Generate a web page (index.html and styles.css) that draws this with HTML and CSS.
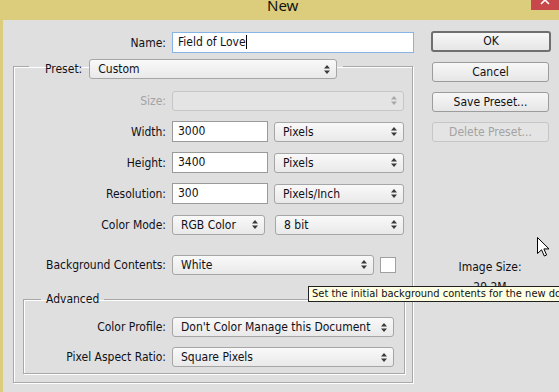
FILE: index.html
```html
<!DOCTYPE html>
<html lang="en">
<head>
  <meta charset="UTF-8">
  <title>New</title>
  <link rel="stylesheet" href="styles.css">
</head>
<body>

  <div class="titlebar">
    <span class="title">New</span>
    <span class="close">
      <svg width="28" height="10" viewBox="0 0 28 10"><path d="M10 -4L18 4M18 -4L10 4" stroke="#fff" stroke-width="1.6"/></svg>
    </span>
  </div>

  <div class="frame">
    <div class="main">
      <div class="row name-row">
        <span class="lbl">Name:</span>
        <div class="field name-field">Field of Love<span class="caret"></span></div>
      </div>

      <fieldset class="group preset">
        <legend>
          <span class="legend-lbl">Preset:</span>
          <div class="select w-preset"><span>Custom</span><svg class="arrows" width="6" height="9" viewBox="0 0 6 9"><path d="M3 0L6 3.5H0ZM0 5.5H6L3 9Z"/></svg></div>
        </legend>

        <div class="row disabled">
          <span class="lbl">Size:</span>
          <div class="select w-full"><span></span><svg class="arrows" width="6" height="9" viewBox="0 0 6 9"><path d="M3 0L6 3.5H0ZM0 5.5H6L3 9Z"/></svg></div>
        </div>
        <div class="row">
          <span class="lbl">Width:</span>
          <div class="field w-num">3000</div>
          <div class="select w-unit"><span>Pixels</span><svg class="arrows" width="6" height="9" viewBox="0 0 6 9"><path d="M3 0L6 3.5H0ZM0 5.5H6L3 9Z"/></svg></div>
        </div>
        <div class="row">
          <span class="lbl">Height:</span>
          <div class="field w-num">3400</div>
          <div class="select w-unit"><span>Pixels</span><svg class="arrows" width="6" height="9" viewBox="0 0 6 9"><path d="M3 0L6 3.5H0ZM0 5.5H6L3 9Z"/></svg></div>
        </div>
        <div class="row">
          <span class="lbl">Resolution:</span>
          <div class="field w-num">300</div>
          <div class="select w-unit"><span>Pixels/Inch</span><svg class="arrows" width="6" height="9" viewBox="0 0 6 9"><path d="M3 0L6 3.5H0ZM0 5.5H6L3 9Z"/></svg></div>
        </div>
        <div class="row">
          <span class="lbl">Color Mode:</span>
          <div class="select w-mode"><span>RGB Color</span><svg class="arrows" width="6" height="9" viewBox="0 0 6 9"><path d="M3 0L6 3.5H0ZM0 5.5H6L3 9Z"/></svg></div>
          <div class="select w-bits"><span>8 bit</span><svg class="arrows" width="6" height="9" viewBox="0 0 6 9"><path d="M3 0L6 3.5H0ZM0 5.5H6L3 9Z"/></svg></div>
        </div>
        <div class="row row-bg">
          <span class="lbl">Background Contents:</span>
          <div class="select w-bg"><span>White</span><svg class="arrows" width="6" height="9" viewBox="0 0 6 9"><path d="M3 0L6 3.5H0ZM0 5.5H6L3 9Z"/></svg></div>
          <div class="swatch"></div>
        </div>

        <fieldset class="group advanced">
          <legend>Advanced</legend>
          <div class="row">
            <span class="lbl">Color Profile:</span>
            <div class="select w-adv"><span>Don't Color Manage this Document</span><svg class="arrows" width="6" height="9" viewBox="0 0 6 9"><path d="M3 0L6 3.5H0ZM0 5.5H6L3 9Z"/></svg></div>
          </div>
          <div class="row">
            <span class="lbl">Pixel Aspect Ratio:</span>
            <div class="select w-adv"><span>Square Pixels</span><svg class="arrows" width="6" height="9" viewBox="0 0 6 9"><path d="M3 0L6 3.5H0ZM0 5.5H6L3 9Z"/></svg></div>
          </div>
        </fieldset>
      </fieldset>
    </div>

    <div class="side">
      <div class="btn btn-default">OK</div>
      <div class="btn">Cancel</div>
      <div class="btn">Save Preset...</div>
      <div class="btn btn-disabled">Delete Preset...</div>
      <div class="image-size">Image Size:</div>
      <div class="image-size-value">29.2M</div>
    </div>
  </div>

  <div class="tooltip">Set the initial background contents for the new document.</div>

  <svg class="cursor" width="13" height="20" viewBox="0 0 13 20">
    <path d="M0.5 0.5V16.5L4.5 12.8L7.3 19L9.6 18L6.9 11.9H12Z" fill="#fff" stroke="#000" stroke-width="1" stroke-linejoin="miter"/>
  </svg>

</body>
</html>
```

FILE: styles.css
```css
html, body {
  margin: 0;
  height: 100%;
}
body {
  position: relative;
  overflow: hidden;
  background: #dfdfdf;
  font-family: "DejaVu Sans Condensed", "DejaVu Sans", sans-serif;
  font-stretch: condensed;
  font-size: 12px;
  color: #101018;
}
.titlebar {
  display: flex;
  height: 20px;
  background: #dccd7c;
}
.title {
  margin-left: 267px;
  font-family: "Noto Sans", sans-serif;
  font-stretch: normal;
  font-size: 15px;
  line-height: 11px;
  color: #111;
}
.close {
  margin-left: auto;
  width: 28px;
  height: 10px;
  background: #c7474b;
}
.close svg {
  display: block;
}
.frame {
  display: flex;
  height: 372px;
  border-left: 3px solid #dccd7c;
}
.main {
  width: 412px;
  padding: 12px 0 0 10px;
  box-sizing: border-box;
}
.side {
  display: flex;
  flex-direction: column;
  align-items: flex-start;
  padding: 11px 0 0 16px;
}

/* rows */
.row {
  display: flex;
  align-items: center;
  gap: 6px;
  height: 21px;
  margin-top: 10px;
}
.lbl {
  width: 152px;
  flex: none;
  text-align: right;
}
.name-row {
  margin-top: 0;
}
.name-row .lbl {
  width: 153px;
}
.disabled .lbl {
  color: #a3a3a3;
}
.row-bg {
  margin-top: 19px;
}

/* group boxes */
.group {
  margin: 0;
  border: 1px solid #a8a8a8;
  box-shadow: 1px 1px 0 #fff, inset 1px 1px 0 #fff;
  box-sizing: border-box;
}
.preset {
  width: 400px;
  padding: 1px 0 8px 0;
}
.preset > legend {
  display: flex;
  align-items: center;
  padding: 6px 6px 0 16px;
  margin-left: 15px;
}
.legend-lbl {
  margin-right: 7px;
}
.advanced {
  width: 382px;
  margin: 17px 0 0 9px;
  padding: 0 0 6px 0;
}
.advanced > legend {
  padding: 0 5px;
  margin-left: 17px;
  line-height: 15px;
}
.advanced .lbl {
  width: 142px;
}
.advanced .row {
  height: 20px;
}

/* controls */
.field {
  height: 21px;
  box-sizing: border-box;
  border: 1px solid #9a9a9a;
  background: #fff;
  padding-left: 5px;
  line-height: 19px;
  white-space: nowrap;
}
.name-field {
  width: 242px;
  border-color: #86b4e4;
}
.caret {
  display: inline-block;
  width: 1px;
  height: 14px;
  background: #000;
  vertical-align: -3px;
}
.select {
  display: flex;
  align-items: center;
  justify-content: space-between;
  height: 20px;
  box-sizing: border-box;
  border: 1px solid #a6a6a6;
  border-radius: 3px;
  background: linear-gradient(#f9f9f9, #e9e9e9);
  padding: 0 6px 0 8px;
  white-space: nowrap;
}
.arrows {
  flex: none;
  fill: #3a3a3a;
}
.disabled .select {
  border-color: #c6c6c6;
  background: #e4e4e4;
}
.disabled .arrows {
  fill: #a8a8a8;
}
.w-preset { width: 248px; }
.w-full { width: 232px; }
.w-num { width: 96px; }
.w-unit { width: 130px; }
.w-mode { width: 93px; }
.w-bits { width: 129px; margin-left: 4px; }
.w-bg { width: 202px; }
.w-adv { width: 222px; }
.swatch {
  width: 16px;
  height: 16px;
  box-sizing: border-box;
  border: 1px solid #a0a0a0;
  background: #fff;
}

/* buttons */
.btn {
  width: 117px;
  height: 20px;
  margin: 10px 0 0 1px;
  box-sizing: border-box;
  border: 1px solid #9c9c9c;
  border-radius: 3px;
  background: linear-gradient(#f7f7f7, #e6e6e6);
  text-align: center;
  line-height: 18px;
}
.btn-default {
  width: 120px;
  height: 21px;
  margin: 0;
  border: 2px solid #6f6f6f;
  line-height: 17px;
}
.btn-disabled {
  border-color: #c6c6c6;
  background: #e4e4e4;
  color: #a3a3a3;
}
.image-size {
  width: 118px;
  margin-top: 118px;
  text-align: center;
}
.image-size-value {
  width: 118px;
  margin-top: 6px;
  text-align: center;
}

/* overlays */
.tooltip {
  position: absolute;
  left: 308px;
  top: 286px;
  height: 16px;
  box-sizing: border-box;
  padding: 0 3px;
  border: 1px solid #222;
  background: #ffffe1;
  font-size: 11px;
  line-height: 14px;
  white-space: nowrap;
}
.cursor {
  position: absolute;
  left: 537px;
  top: 237px;
}
```
